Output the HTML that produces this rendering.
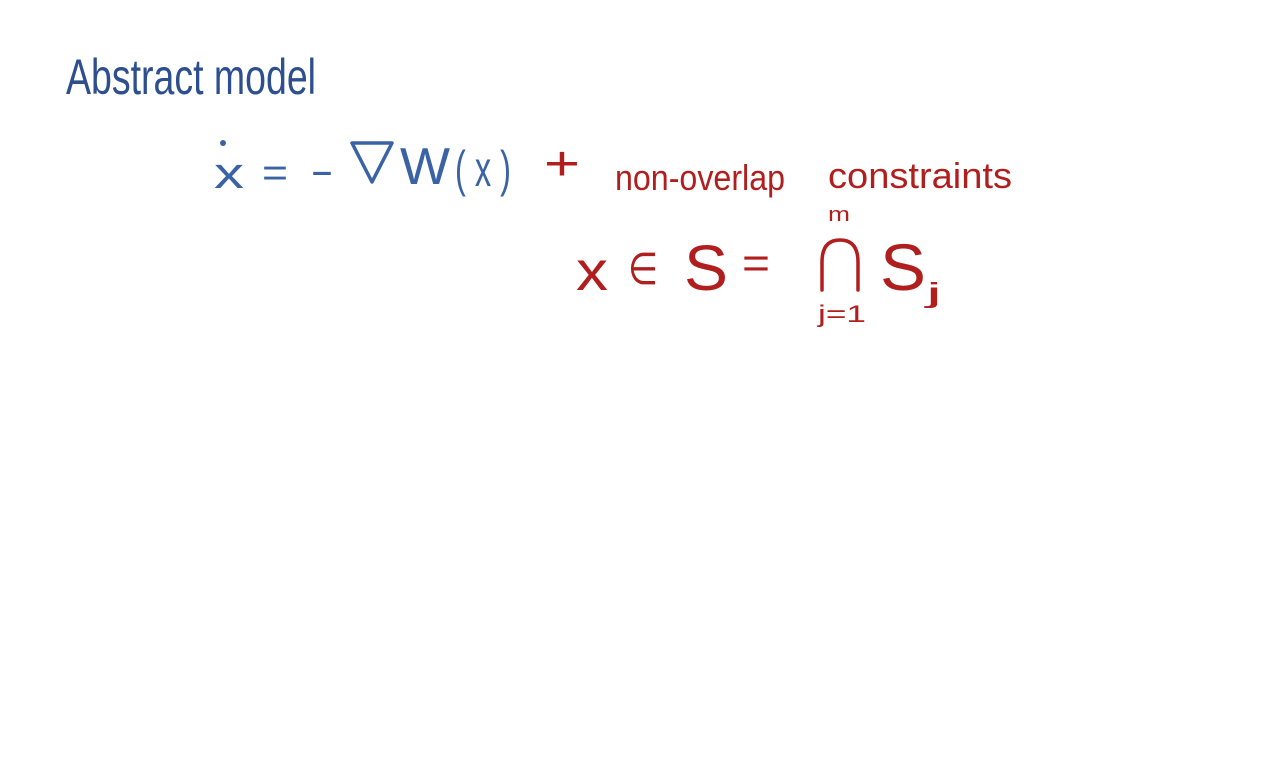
<!DOCTYPE html>
<html><head><meta charset="utf-8"><style>
html,body{margin:0;padding:0;background:#fff;}
svg{display:block;}
text{font-family:"Liberation Sans","DejaVu Sans",sans-serif;}
</style></head><body>
<svg width="1280" height="768" viewBox="0 0 1280 768" xmlns="http://www.w3.org/2000/svg">
<g fill="#2d4f8e">
<text x="66" y="94" font-size="50" textLength="250" lengthAdjust="spacingAndGlyphs">Abstract model</text>
</g>
<g fill="#3a63a6">
<circle cx="223" cy="143" r="3"/>
<text x="214" y="188" font-size="44" textLength="30" lengthAdjust="spacingAndGlyphs">x</text>
<text x="262" y="186" font-size="40" textLength="26" lengthAdjust="spacingAndGlyphs">=</text>
<text x="310" y="184" font-size="40" textLength="24" lengthAdjust="spacingAndGlyphs">-</text>
<path d="M352 143 L392 143 L372 182 Z" fill="none" stroke="#3a63a6" stroke-width="3.5" stroke-linejoin="round"/>
<text x="400" y="184" font-size="52" textLength="50" lengthAdjust="spacingAndGlyphs">W</text>
<text x="455" y="186" font-size="50" textLength="56" lengthAdjust="spacingAndGlyphs">( x )</text>
</g>
<g fill="#b01e1e">
<text x="544" y="180" font-size="48" textLength="36" lengthAdjust="spacingAndGlyphs">+</text>
<text x="615" y="190" font-size="36" textLength="170" lengthAdjust="spacingAndGlyphs">non-overlap</text>
<text x="828" y="188" font-size="36" textLength="184" lengthAdjust="spacingAndGlyphs">constraints</text>
<text x="576" y="290" font-size="56" textLength="32" lengthAdjust="spacingAndGlyphs">x</text>
<text x="628" y="284" font-size="44" textLength="30" lengthAdjust="spacingAndGlyphs">∈</text>
<text x="684" y="290" font-size="64" textLength="44" lengthAdjust="spacingAndGlyphs">S</text>
<text x="742" y="278" font-size="44" textLength="28" lengthAdjust="spacingAndGlyphs">=</text>
<text x="828" y="221" font-size="20" textLength="22" lengthAdjust="spacingAndGlyphs">m</text>
<path d="M822 290 V262 Q822 240 840 240 Q858 240 858 262 V290" fill="none" stroke="#b01e1e" stroke-width="3.5" stroke-linecap="round"/>
<text x="818" y="322" font-size="24" textLength="48" lengthAdjust="spacingAndGlyphs">j=1</text>
<text x="880" y="290" font-size="66" textLength="46" lengthAdjust="spacingAndGlyphs">S</text>
<text x="926" y="302" font-size="28" textLength="16" lengthAdjust="spacingAndGlyphs">j</text>
</g>
</svg>
</body></html>
